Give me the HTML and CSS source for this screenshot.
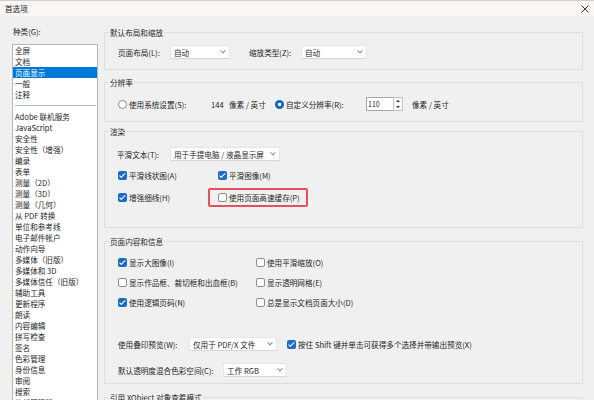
FILE: index.html
```html
<!DOCTYPE html>
<html lang="zh-CN">
<head>
<meta charset="utf-8">
<title>首选项</title>
<link rel="stylesheet" href="styles.css">
</head>
<body>
<div class="window">
  <header class="titlebar">
    <span class="title">首选项</span>
    <span class="close">
      <svg width="8" height="8" viewBox="0 0 8 8"><path d="M0.5 0.5L7.5 7.5M7.5 0.5L0.5 7.5" stroke="#333" stroke-width="1" fill="none"/></svg>
    </span>
  </header>
  <div class="content">
    <aside class="categories">
      <div class="cat-label">种类(G):</div>
      <ul class="cat-list">
        <li>全屏</li>
        <li>文档</li>
        <li class="selected">页面显示</li>
        <li>一般</li>
        <li>注释</li>
        <li class="sep"></li>
        <li>Adobe 联机服务</li>
        <li>JavaScript</li>
        <li>安全性</li>
        <li>安全性（增强）</li>
        <li>编录</li>
        <li>表单</li>
        <li>测量（2D）</li>
        <li>测量（3D）</li>
        <li>测量（几何）</li>
        <li>从 PDF 转换</li>
        <li>单位和参考线</li>
        <li>电子邮件帐户</li>
        <li>动作向导</li>
        <li>多媒体（旧版）</li>
        <li>多媒体和 3D</li>
        <li>多媒体信任（旧版）</li>
        <li>辅助工具</li>
        <li>更新程序</li>
        <li>朗读</li>
        <li>内容编辑</li>
        <li>拼写检查</li>
        <li>签名</li>
        <li>色彩管理</li>
        <li>身份信息</li>
        <li>审阅</li>
        <li>搜索</li>
        <li>信任管理器</li>
      </ul>
    </aside>

    <main class="panel">
      <fieldset class="group g-layout">
        <legend>默认布局和缩放</legend>
        <div class="row">
          <span class="lbl w-layout">页面布局(L):</span>
          <span class="select w-60"><span class="sel-text">自动</span><span class="chev"></span></span>
          <span class="lbl w-zoom">缩放类型(Z):</span>
          <span class="select w-66"><span class="sel-text">自动</span><span class="chev"></span></span>
        </div>
      </fieldset>

      <fieldset class="group g-res">
        <legend>分辨率</legend>
        <div class="row">
          <span class="opt w-sys"><span class="radio"></span>使用系统设置(S):</span>
          <span class="dpi">144</span>
          <span class="unit u-sys">像素 / 英寸</span>
          <span class="opt w-custom"><span class="radio on"></span>自定义分辨率(R):</span>
          <span class="spin">
            <span class="num">110</span>
            <span class="spin-btns"><span class="up"></span><span class="down"></span></span>
          </span>
          <span class="unit u-custom">像素 / 英寸</span>
        </div>
      </fieldset>

      <fieldset class="group g-render">
        <legend>渲染</legend>
        <div class="row">
          <span class="lbl w-smooth">平滑文本(T):</span>
          <span class="select w-110"><span class="sel-text">用于手提电脑 / 液晶显示屏</span><span class="chev"></span></span>
        </div>
        <div class="checks cols-render">
          <span class="opt"><span class="cb on"></span>平滑线状图(A)</span>
          <span class="opt"><span class="cb on"></span>平滑图像(M)</span>
          <span class="opt"><span class="cb on"></span>增强细线(H)</span>
          <span class="opt marked"><span class="cb"></span>使用页面高速缓存(P)</span>
        </div>
      </fieldset>

      <fieldset class="group g-content">
        <legend>页面内容和信息</legend>
        <div class="checks cols-content">
          <span class="opt"><span class="cb on"></span>显示大图像(I)</span>
          <span class="opt"><span class="cb"></span>使用平滑缩放(O)</span>
          <span class="opt"><span class="cb"></span>显示作品框、裁切框和出血框(B)</span>
          <span class="opt"><span class="cb"></span>显示透明网格(E)</span>
          <span class="opt"><span class="cb on"></span>使用逻辑页码(N)</span>
          <span class="opt"><span class="cb"></span>总是显示文档页面大小(D)</span>
        </div>
        <div class="row row-overprint">
          <span class="lbl w-overprint">使用叠印预览(W):</span>
          <span class="select w-88"><span class="sel-text">仅用于 PDF/X 文件</span><span class="chev"></span></span>
          <span class="opt shift-opt"><span class="cb on"></span>按住 Shift 键并单击可获得多个选择并带输出预览(X)</span>
        </div>
        <div class="row row-blend">
          <span class="lbl w-blend">默认透明度混合色彩空间(C):</span>
          <span class="select w-64"><span class="sel-text">工作 RGB</span><span class="chev"></span></span>
        </div>
      </fieldset>

      <fieldset class="group g-xobject">
        <legend>引用 XObject 对象查看模式</legend>
        <div class="row"></div>
      </fieldset>
    </main>
  </div>
</div>
</body>
</html>
```

FILE: styles.css
```css
* { box-sizing: border-box; }

html, body {
  margin: 0;
  padding: 0;
}

body {
  background: #f0f0f0;
  font-family: "Noto Sans CJK SC", "Noto Sans", sans-serif;
  font-size: 7.6px;
  line-height: 11px;
  color: #1e1e1e;
}

.window {
  width: 594px;
  height: 400px;
  overflow: hidden;
  display: flex;
  flex-direction: column;
}

/* Title bar */
.titlebar {
  height: 16px;
  flex: none;
  display: flex;
  align-items: center;
  justify-content: space-between;
  padding: 0 5px 0 5px;
  background: #fbf6f4;
  border-top: 1px solid #cfcfcf;
}

.title { color: #222; }

.close {
  display: flex;
  width: 8px;
  height: 8px;
}

.content {
  flex: 1;
  display: flex;
  min-height: 0;
}

/* Category list */
.categories {
  width: 104px;
  flex: none;
  padding-left: 12px;
}

.cat-label {
  margin-top: 10px;
  margin-left: 1px;
  height: 11px;
}

.cat-list {
  list-style: none;
  margin: 7px 0 0 0;
  padding: 0;
  width: 86px;
  height: 400px;
  background: #fff;
  border: 1px solid #b7b7b7;
}

.cat-list li {
  height: 11px;
  padding-left: 2px;
  white-space: nowrap;
}

.cat-list li.selected {
  background: #0078d7;
  color: #fff;
}

.cat-list li.sep {
  padding: 5px 1px 0 2px;
}

.cat-list li.sep::before {
  content: "";
  display: block;
  height: 1px;
  background: #a9bccd;
}

/* Settings panel */
.panel {
  flex: 1;
  padding: 10.5px 11px 0 0;
}

.group {
  margin: 0;
  padding: 0 0 0 4px;
  min-width: 0;
  border: 1px solid #dddddd;
}

.group legend {
  padding: 0 1px;
  line-height: 11px;
  color: #2a2a2a;
}

.row {
  display: flex;
  align-items: center;
  height: 14px;
  padding-left: 9px;
  white-space: nowrap;
}

.g-layout { padding-top: 7.5px; padding-bottom: 10px; margin-bottom: 6.5px; }
.g-res { padding-top: 9.5px; padding-bottom: 10px; margin-bottom: 3.5px; }
.g-render { padding-top: 10.5px; padding-bottom: 23px; margin-bottom: 7.5px; }
.g-content { padding-top: 8.5px; padding-bottom: 6px; margin-bottom: 7.5px; }
.g-xobject { padding-top: 8px; }

.lbl { flex: none; }
.w-layout { width: 52px; }
.w-zoom { width: 52px; margin-left: 19px; }
.w-smooth { width: 53px; margin-left: -1px; }
.w-overprint { width: 71px; }
.w-blend { width: 105px; }

/* Drop-down boxes */
.select {
  flex: none;
  height: 14px;
  display: flex;
  align-items: center;
  justify-content: space-between;
  padding: 0 4px 0 3px;
  background: #fff;
  border: 1px solid #e6e6e6;
  border-bottom-color: #d6d6d6;
}

.w-60 { width: 60px; }
.w-66 { width: 66px; }
.w-110 { width: 110px; }
.w-88 { width: 88px; }
.w-64 { width: 64px; }

.chev {
  width: 4px;
  height: 4px;
  border-right: 1px solid #8a8a8a;
  border-bottom: 1px solid #8a8a8a;
  transform: rotate(45deg) translate(-1px, -1px);
}

/* Radio buttons and check boxes */
.opt {
  display: inline-flex;
  align-items: center;
  white-space: nowrap;
}

.radio {
  width: 9px;
  height: 9px;
  margin-right: 2px;
  border-radius: 50%;
  border: 1px solid #8b8b8b;
  background: #fff;
  flex: none;
}

.radio.on {
  border: none;
  background: radial-gradient(circle, #fff 0 1.6px, #1467c4 2px);
}

.cb {
  position: relative;
  width: 9px;
  height: 9px;
  margin-right: 2px;
  border-radius: 2px;
  border: 1px solid #8e8e8e;
  background: #fff;
  flex: none;
}

.cb.on {
  border: none;
  background: #1c6cc6;
}

.cb.on::after {
  content: "";
  position: absolute;
  left: 3.2px;
  top: 1.2px;
  width: 2.2px;
  height: 4.6px;
  border: solid #fff;
  border-width: 0 1.2px 1.2px 0;
  transform: rotate(45deg);
}

/* Resolution row */
.w-sys { width: 93px; }
.dpi { width: 18px; }
.u-sys { width: 46px; }
.w-custom { width: 91px; }
.u-custom { margin-left: 9px; }

.spin {
  display: flex;
  height: 14px;
}

.num {
  width: 27px;
  height: 14px;
  padding-left: 1px;
  background: #fff;
  border: 1px solid #a6a6a6;
  border-right: none;
  font-size: 7px;
  line-height: 12px;
}

.spin-btns {
  width: 10px;
  display: flex;
  flex-direction: column;
  background: #f9f9f9;
  border: 1px solid #c4c4c4;
}

.spin-btns span {
  flex: 1;
  display: flex;
  align-items: center;
  justify-content: center;
}

.spin-btns .up::before {
  content: "";
  border-left: 2px solid transparent;
  border-right: 2px solid transparent;
  border-bottom: 2.5px solid #333;
}

.spin-btns .down::before {
  content: "";
  border-left: 2px solid transparent;
  border-right: 2px solid transparent;
  border-top: 2.5px solid #333;
}

/* Check box grids */
.checks {
  display: grid;
  padding-left: 9px;
  align-items: center;
  justify-items: start;
}

.cols-render {
  grid-template-columns: 100px auto;
  grid-auto-rows: 14px;
  row-gap: 7.5px;
  margin-top: 7.5px;
}

.cols-content {
  grid-template-columns: 138px auto;
  grid-auto-rows: 14px;
  row-gap: 6px;
}

/* Red call-out frame around one option */
.marked {
  position: relative;
}

.marked::after {
  content: "";
  position: absolute;
  left: -10px;
  right: -8px;
  top: -4px;
  bottom: -4px;
  border: 2px solid #e4505b;
  border-radius: 2px;
}

.row-overprint { margin-top: 28px; }
.row-blend { margin-top: 12px; }

.shift-opt { margin-left: 10px; }
```
